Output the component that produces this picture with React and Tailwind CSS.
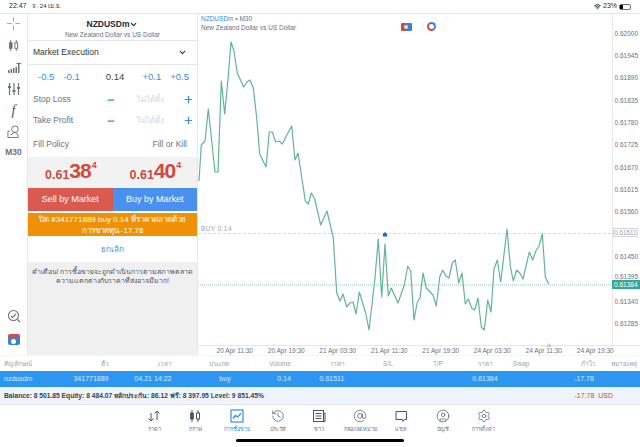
import React from 'react';
import { ChevronDown, Plus, Minus, History, AtSign, CircleUser, Settings, Wifi } from 'lucide-react';

const FONT = "font-['Liberation_Sans','Noto_Sans',sans-serif]";

const line = `199,180 201.3,144 205,140 208.3,108 211.7,140 215,171 218,171 221.3,80 224.7,113 228,78 231,41 234,50 237.3,72 243.7,86 247,81 250,79 253.3,87 256.7,117 259.7,153 266,166 269.3,131 272.3,131 275.7,141 279,140 282.3,143 285.3,137 291.7,125 295,159 298,152 302.3,180 305.3,200 308.3,203 311.3,192 314.7,198 320.7,224 327,210 333.3,237 336.7,292 340,300 343,293 346.7,306 350,302 353,301 356,313 359.3,291 365.7,312 369,329 374.7,280 378.3,238 381.7,296 385,243 388.3,295 391.3,287 398,302 404.3,284 407.7,265 410.7,270 414,319 417.3,301 420,297 423,272 426.3,287 433,294 436.3,305 439.7,276 442.7,269 446,275 449,277 452.3,262 455.3,259 458.7,282 462,272 465.3,303 468.3,298 471.7,307 474.7,309 478,297 481.3,326 484.3,329 487.7,299 491,311 494,268 497.3,259 500.7,281 507,228 510.3,265 513.3,280 516.7,269 519.7,272 523,278 529.3,251 532.7,259 535.7,250 539,245 542.3,233 545.3,276 548.7,283`;

const yLabels = [
  ['0.62000', 34], ['0.61945', 56], ['0.61890', 78], ['0.61835', 101], ['0.61780', 123],
  ['0.61725', 145], ['0.61670', 168], ['0.61615', 190], ['0.61560', 212], ['0.61450', 257],
  ['0.61395', 277], ['0.61340', 302], ['0.61285', 324],
];

const xLabels = ['20 Apr 11:30', '20 Apr 19:30', '21 Apr 03:30', '21 Apr 11:30', '21 Apr 19:30', '24 Apr 03:30', '24 Apr 11:30', '24 Apr 19:30'];

const headers = [
  ['สัญลักษณ์', 'w-[76px] pl-1 text-left'],
  ['ตั๋ว', 'w-[58px] text-center'],
  ['เวลา', 'w-[62px] text-center'],
  ['ประเภท', 'w-[46px] text-center'],
  ['Volume', 'w-[76px] text-center'],
  ['ราคา', 'w-[38px] text-center'],
  ['S/L', 'w-[64px] text-center'],
  ['T/P', 'w-[36px] text-center'],
  ['ราคา', 'ml-[12px] w-[34px] text-center'],
  ['Swap', 'ml-[3px] w-[32px] text-center'],
  ['กำไร', 'ml-[36px] w-[30px] text-center'],
  ['หมายเหตุ', 'ml-auto pr-[3px] text-right'],
];

const cells = [
  ['nzdusdm', 'w-[66px] pl-1 text-left'],
  ['341771889', 'w-[50px] text-center'],
  ['04.21 14:22', 'ml-[10px] w-[54px] text-center'],
  ['buy', 'ml-[25px] w-[40px] text-center'],
  ['0.14', 'ml-[19px] w-[40px] text-center'],
  ['0.61511', 'ml-[12px] w-[32px] text-center'],
  ['0.61384', 'ml-[121px] w-[32px] text-center'],
  ['-17.78', 'ml-[67px] w-[32px] text-center'],
];

const Candles = ({ size = 14 }) => (
  <svg width={size} height={size} viewBox="0 0 14 14" fill="none" stroke="currentColor">
    <path d="M4 1v12M10 1v12" strokeWidth="1" />
    <rect x="2.500" y="4" width="3" height="6" fill="currentColor" strokeWidth="0.8" />
    <rect x="8.500" y="4" width="3" height="6" fill="white" strokeWidth="1" />
  </svg>
);

const PriceArrows = () => (
  <svg width="14" height="14" viewBox="0 0 14 14" fill="none" stroke="currentColor" strokeWidth="1">
    <path d="M4 4v8M1.500 9.500 4 12l2.500-2.500M10 11V2M7.500 4.500 10 2l2.500 2.500" />
  </svg>
);

const TradeBox = () => (
  <svg width="14" height="14" viewBox="0 0 14 14" fill="none" stroke="currentColor">
    <rect x="1" y="1" width="12" height="12" strokeWidth="1.200" />
    <path d="M3 9.500 5.500 6.500 7.500 8 11 4.500" strokeWidth="1.300" />
  </svg>
);

const News = () => (
  <svg width="14" height="14" viewBox="0 0 14 14" fill="none" stroke="currentColor" strokeWidth="1">
    <rect x="1.500" y="1.500" width="10" height="11" />
    <path d="M3.500 4.500h6M3.500 7h6M3.500 9.500h6M11.500 4h1.500v8.500h-1.500" />
  </svg>
);

const Chat = () => (
  <svg width="14" height="14" viewBox="0 0 14 14" fill="none" stroke="currentColor" strokeWidth="1">
    <path d="M2 2.500h10.500v8h-2L9 12.500l-.5-2H2z" />
  </svg>
);

const tabs = [
  [PriceArrows, 'ราคา'],
  [Candles, 'กราฟ'],
  [TradeBox, 'การซื้อขาย'],
  [() => <History size={14} strokeWidth={1.200} />, 'ประวัติ'],
  [News, 'ข่าว'],
  [() => <AtSign size={14} strokeWidth={1.200} />, 'กล่องจดหมาย'],
  [Chat, 'แชท'],
  [() => <CircleUser size={14} strokeWidth={1.200} />, 'บัญชี'],
  [() => <Settings size={14} strokeWidth={1.200} />, 'การตั้งค่า'],
];

const Rail = () => (
  <div className="w-[27px] shrink-0 flex flex-col items-center text-gray-500">
    <div className="h-[18px] flex items-center">
      <svg width="13" height="13" viewBox="0 0 14 14" stroke="#9ca3af" strokeWidth="1">
        <path d="M7 0v5M7 9v5M0 7h5M9 7h5" />
      </svg>
    </div>
    <div className="mt-[2px] h-[22px] flex items-center"><Candles size={13} /></div>
    <div className="h-[22px] flex items-center">
      <svg width="14" height="12" viewBox="0 0 14 12" fill="#6b7280">
        <path d="M1 9h1.500v3H1zM3.500 8H5v4H3.500zM6 7h1.500v5H6zM8.500 6H10v6H8.500zM11 3h1.500v9H11zM9.500 2h4.500v1H9.500z" />
      </svg>
    </div>
    <div className="h-[22px] flex items-center">
      <svg width="14" height="14" viewBox="0 0 14 14" fill="none" stroke="#6b7280" strokeWidth="1.200">
        <path d="M2.500 1v12M7 1v12M11.500 1v12" />
        <path d="M1 5h3M5.500 9h3M10 6h3" strokeWidth="2" />
      </svg>
    </div>
    <div className="h-[20px] flex items-center text-[14px] italic text-gray-600 font-['Liberation_Serif',serif]">f</div>
    <div className="h-[22px] flex items-center">
      <svg width="13" height="13" viewBox="0 0 14 14" fill="none" stroke="#6b7280" strokeWidth="1">
        <circle cx="8.500" cy="4.500" r="3.500" />
        <path d="M3 6.500H1v7h11v-3l-3.500-2.500h-1L4 11" />
      </svg>
    </div>
    <div className="h-[20px] flex items-center text-[8.500px] font-bold">M30</div>
    <div className="mt-[146px] h-[16px] flex items-center">
      <svg width="14" height="14" viewBox="0 0 14 14" fill="none" stroke="#6b7280" strokeWidth="1.100">
        <circle cx="6.500" cy="6.500" r="5" />
        <path d="M10.500 10.500 13 13M4 7l1.500 1.500L9 5" />
      </svg>
    </div>
    <div className="mt-[10px] w-[12px] h-[11px] rounded-[2px] bg-[#3b82d6] border-t-[3px] border-[#d0503f] flex items-center justify-center">
      <span className="w-[5px] h-[5px] rounded-full bg-white" />
    </div>
  </div>
);

const OrderRow = ({ label }) => (
  <div className="h-[21px] flex items-center pl-[5px] pr-[3px] text-[8.500px] text-gray-500 -translate-y-[1px]">
    <span className="w-[73px]">{label}</span>
    <Minus size={10} className="text-[#2f8fe8]" strokeWidth={3} />
    <span className="ml-[21px] text-[8px] text-gray-300 w-[46px]">ไม่ได้ตั้ง</span>
    <Plus size={11} className="ml-auto text-[#2f8fe8]" strokeWidth={2.500} />
  </div>
);

const Price = ({ big, sup, className }) => (
  <div className={`flex-1 flex items-start text-[#cf4a3f] font-bold ${className}`}>
    <span className="text-[12.500px] mt-[9px]">0.61</span>
    <span className="text-[21px] leading-[24px] mt-[2px] tracking-[-1px]">{big}</span>
    <span className="text-[9px] leading-[10px] mt-[3px] ml-[1px]">{sup}</span>
  </div>
);

const OrderPanel = () => (
  <div className="w-[171px] shrink-0 flex flex-col border-l border-r border-gray-200 text-[#333]">
    <div className="h-[27px] pt-[3px] flex flex-col items-center justify-center border-b border-gray-200">
      <div className="flex items-center text-[8.500px] font-bold leading-[11px] text-gray-800">NZDUSDm<ChevronDown size={9} strokeWidth={3} /></div>
      <div className="text-[6.500px] leading-[9px] text-gray-500">New Zealand Dollar vs US Dollar</div>
    </div>
    <div className="h-[24px] flex items-center justify-between px-[5px] border-b border-gray-200 text-[8.500px]">
      Market Execution<ChevronDown size={9} strokeWidth={3} className="mr-[5px]" />
    </div>
    <div className="h-[25px] flex items-center text-[9.500px] text-[#2f8fe8] pl-[10px] pr-[8px]">
      <span>-0.5</span>
      <span className="ml-[9px]">-0.1</span>
      <span className="ml-[26px] text-gray-700">0.14</span>
      <span className="ml-auto">+0.1</span>
      <span className="ml-[9px]">+0.5</span>
    </div>
    <OrderRow label="Stop Loss" />
    <OrderRow label="Take Profit" />
    <div className="h-[25px] flex items-center justify-between pl-[5px] pr-[10px] text-[8.500px] text-gray-500">
      <span>Fill Policy</span><span>Fill or Kill</span>
    </div>
    <div className="h-[31px] flex bg-[#f2f2f2]">
      <Price big="38" sup="4" className="pl-[17px]" />
      <Price big="40" sup="4" className="pl-[17px]" />
    </div>
    <div className="h-[23px] flex text-white text-[9px] font-medium">
      <div className="flex-1 flex items-center justify-center bg-[#db5a50]">Sell by Market</div>
      <div className="flex-1 flex items-center justify-center bg-[#4a90ee]">Buy by Market</div>
    </div>
    <div className="mt-[2px] h-[23px] pt-[1px] bg-[#ee9104] text-white text-[8px] leading-[11px] text-center font-medium px-2">
      ปิด #341771889 buy 0.14 ที่ราคาตลาดด้วย การขาดทุน -17.78
    </div>
    <div className="h-[26px] pt-[2px] flex items-center justify-center text-[#2f8fe8] text-[8px]">ยกเลิก</div>
    <div className="flex-1 bg-[#f0f0f0] pt-[5px] text-center text-[7px] leading-[9px] text-gray-600 whitespace-nowrap">
      <div>คำเตือน! การซื้อขายจะถูกดำเนินการตามสภาพตลาด</div>
      <div>ความแตกต่างกับราคาที่ส่งอาจมีมาก!</div>
    </div>
  </div>
);

const Chart = () => (
  <div className="flex-1 relative flex flex-col min-w-0">
    <div className="flex-1 flex border-b border-gray-200">
      <div className="flex-1 pl-[3px] pt-[1px] text-[6.500px] leading-[8.500px] text-gray-500">
        <div><span className="text-[#2f8fe8]">NZDUSDm</span> • M30</div>
        <div>New Zealand Dollar vs US Dollar</div>
      </div>
      <div className="w-[28px] border-l border-gray-200" />
    </div>
    <div className="h-[9px] flex pl-[11px] text-[6.500px] leading-[9px] text-gray-500">
      {xLabels.map((t) => <span key={t} className="w-[51.500px] text-center">{t}</span>)}
    </div>

    {/* price line and levels, viewBox in page coords */}
    <svg className="absolute left-0 top-0" width="442" height="342" viewBox="198 13 442 342" fill="none">
      <path d="M198 232.500H612" stroke="#c8c8c8" strokeWidth="0.7" strokeDasharray="3 2" />
      <path d="M198 284H612" stroke="#6cc0a0" strokeWidth="0.8" strokeDasharray="1 1" />
      <polyline points={line} stroke="#63b592" strokeWidth="1.200" strokeLinejoin="round" />
      <path d="M385 231l2.200 2v2.500h-4.400v-2.500z" fill="#1f6fd8" />
      <path d="M549 342l3 4h-6z" fill="#c8c8c8" />
    </svg>

    <span className="absolute left-[3px] top-[211px] text-[6.500px] leading-[8px] text-gray-400 tracking-[0.4px]">BUY 0.14</span>

    {/* icons sit over the chart */}
    <div className="absolute left-[203px] top-[9px] w-[11px] h-[8px] rounded-[1px] bg-[#3b82d6] border-l-[4px] border-[#c4513f] flex items-center">
      <span className="-ml-[1px] w-[4px] h-[4px] rounded-full bg-white/80" />
    </div>
    <div className="absolute left-[229px] top-[8px] w-[9px] h-[9px] rounded-full border-2 border-l-[#c4513f] border-b-[#c4513f] border-t-[#3b82d6] border-r-[#3b82d6]" />

    {yLabels.map(([t, y]) => (
      <span key={t} className="absolute right-[2px] text-[6.500px] leading-[8px] text-gray-500" style={{ top: y - 18 }}>{t}</span>
    ))}
    <span className="absolute left-[415px] top-[214px] w-[25px] h-[9px] border border-gray-300 bg-white text-center text-[6.300px] leading-[7px] text-gray-400">0.61511</span>
    <span className="absolute left-[414px] top-[266px] w-[28px] h-[9px] bg-[#35a898] text-white text-[6.500px] leading-[9px] pl-[2px]">0.61384</span>
  </div>
);

export default function App() {
  return (
    <div className={`w-[640px] h-[447px] overflow-hidden bg-white flex flex-col ${FONT}`}>
      <div className="h-[13px] flex items-center justify-between px-[9px] text-[7px] font-medium text-gray-800">
        <span>22:47 <span className="ml-1 text-[6px]">จ. 24 เม.ย.</span></span>
        <span className="flex items-center gap-[2px]">
          <Wifi size={7} strokeWidth={3} />23%
          <span className="w-[12px] h-[6px] border border-gray-500 rounded-[2px] flex">
            <span className="w-[3px] bg-black" />
          </span>
        </span>
      </div>

      <div className="h-[342px] flex border-t border-gray-200">
        <Rail />
        <OrderPanel />
        <Chart />
      </div>

      <div className="h-[16px] flex items-center text-[6.500px] text-gray-400 border-t border-gray-100 whitespace-nowrap">
        {headers.map(([t, cls], i) => <div key={i} className={cls}>{t}</div>)}
      </div>
      <div className="h-[16px] flex items-center text-[7px] text-white/80 bg-[#2c96f3] whitespace-nowrap">
        {cells.map(([t, cls]) => <div key={t} className={cls}>{t}</div>)}
      </div>
      <div className="h-[18px] flex items-center bg-[#eef4fb] border-b border-gray-200 px-1 pt-[1px] text-[6.700px] font-bold text-gray-700">
        <span>Balance: 8 501.85 Equity: 8 484.07 หลักประกัน: 86.12 ฟรี: 8 397.95 Level: 9 851.45%</span>
        <span className="ml-auto mr-[23px] text-[7px] text-[#d1453b] font-medium">-17.78&nbsp; USD</span>
      </div>

      <div className="flex-1 relative flex justify-center pr-[2px] pt-[2px]">
        {tabs.map(([Icon, label], i) => (
          <div key={label} className={`w-[41.200px] flex flex-col items-center ${i === 2 ? 'text-[#2f8fe8]' : 'text-gray-600'}`}>
            <div className="mt-[2px] h-[14px]"><Icon /></div>
            <span className={`mt-[2px] text-[5.500px] leading-[8px] whitespace-nowrap ${i === 2 ? '' : 'text-gray-500'}`}>{label}</span>
          </div>
        ))}
        <div className="absolute left-[236px] bottom-[5px] w-[168px] h-[3px] rounded-full bg-black" />
      </div>
    </div>
  );
}
